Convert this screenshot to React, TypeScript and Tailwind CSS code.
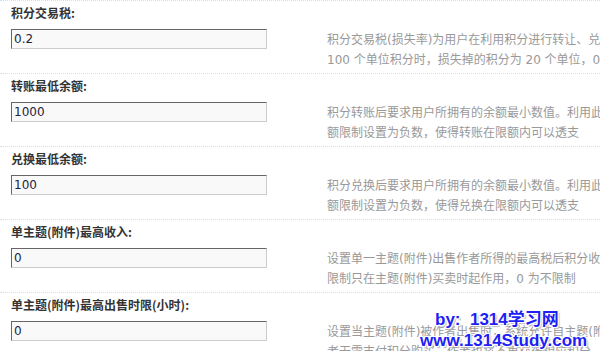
import React from 'react';

type Setting = {
  label: string;
  value: string;
  lines: [string, string];
};

const settings: Setting[] = [
  {
    label: '积分交易税:',
    value: '0.2',
    lines: [
      '积分交易税(损失率)为用户在利用积分进行转让、兑换、买卖时扣除的税率，范围为 0～1 之间的浮点数',
      '100 个单位积分时，损失掉的积分为 20 个单位，0 为不扣除',
    ],
  },
  {
    label: '转账最低余额:',
    value: '1000',
    lines: [
      '积分转账后要求用户所拥有的余额最小数值。利用此功能，您可以设置较大的余额限制',
      '额限制设置为负数，使得转账在限额内可以透支',
    ],
  },
  {
    label: '兑换最低余额:',
    value: '100',
    lines: [
      '积分兑换后要求用户所拥有的余额最小数值。利用此功能，您可以设置较大的余额限制',
      '额限制设置为负数，使得兑换在限额内可以透支',
    ],
  },
  {
    label: '单主题(附件)最高收入:',
    value: '0',
    lines: [
      '设置单一主题(附件)出售作者所得的最高税后积分收入，超过此限制后购买者将仍然被扣除相应积分',
      '限制只在主题(附件)买卖时起作用，0 为不限制',
    ],
  },
  {
    label: '单主题(附件)最高出售时限(小时):',
    value: '0',
    lines: [
      '设置当主题(附件)被作者出售时，系统允许自主题(附件)发布时间开始的多长时间内买卖',
      '者无需支付积分购买，作者也将不再获得相应积分，0 为不限制',
    ],
  },
];

const SettingRow: React.FC<{ item: Setting }> = ({ item }) => (
  <div className="border-b border-dotted border-[#d3dfe9] pb-[3px]">
    <div className="h-[27px] pt-[2px] pl-[11px] text-[12px] leading-[20px] font-bold text-[#333] font-['Noto_Sans_CJK_SC',sans-serif]">
      {item.label}
    </div>
    <div className="flex">
      <div className="w-[327px] shrink-0 pl-[11px]">
        <input
          type="text"
          defaultValue={item.value}
          className="mt-[1px] block w-[256px] h-[20px] pl-[2px] bg-[#f9f9f9] border border-t-[#666] border-l-[#666] border-r-[#ccc] border-b-[#ccc] text-[12px] text-[#1c2340] font-['DejaVu_Sans',sans-serif] outline-none"
        />
      </div>
      <div className="pt-[2px] text-[12px] leading-[20px] text-[#999] whitespace-nowrap font-['DejaVu_Sans','Noto_Sans_CJK_SC',sans-serif]">
        <div>{item.lines[0]}</div>
        <div>{item.lines[1]}</div>
      </div>
    </div>
  </div>
);

export default function App() {
  return (
    <div className="relative w-[600px] h-[351px] overflow-hidden bg-white">
      <div className="border-t border-dotted border-[#d3dfe9]">
        {settings.map((s) => (
          <SettingRow key={s.label} item={s} />
        ))}
      </div>

      {/* watermark */}
      <div className="absolute left-[420px] top-[309px] text-[17px] leading-[21px] font-bold text-[#1e1ef5] font-['Liberation_Sans','Noto_Sans_CJK_SC',sans-serif] [text-shadow:1px_1px_0_#fff,-1px_-1px_0_#fff,1px_-1px_0_#fff,-1px_1px_0_#fff,2px_2px_1px_#bbb]">
        <div className="pl-[15px]">by:&nbsp;&nbsp;1314学习网</div>
        <div>www.1314Study.com</div>
      </div>
    </div>
  );
}
